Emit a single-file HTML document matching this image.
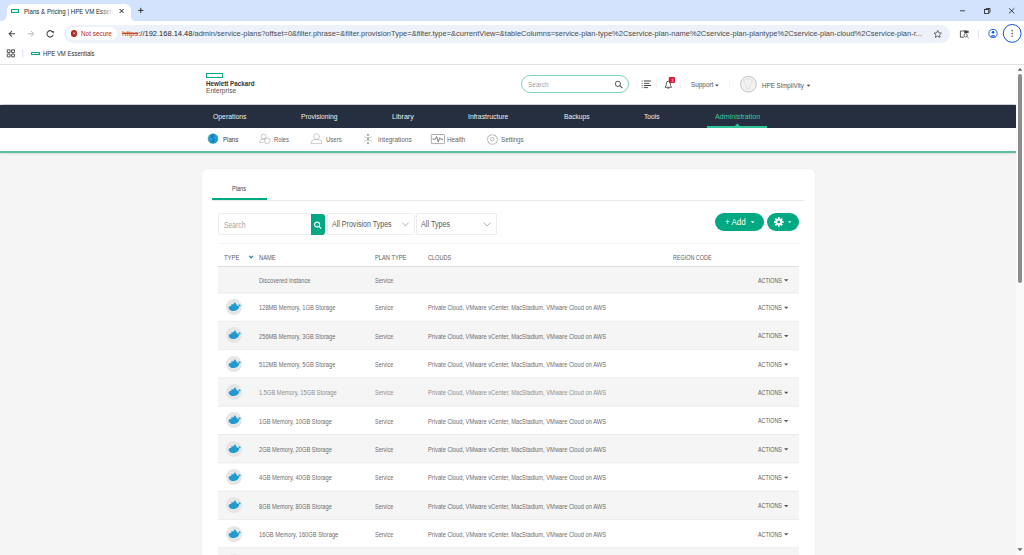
<!DOCTYPE html>
<html><head><meta charset="utf-8">
<style>
*{box-sizing:border-box;margin:0;padding:0}
html,body{width:1024px;height:555px;overflow:hidden;background:#f5f5f5;font-family:"Liberation Sans",sans-serif}
.a{position:absolute}
.t{position:absolute;white-space:nowrap;line-height:1;transform-origin:0 0}
svg{position:absolute;overflow:visible}
.nv{}
</style></head><body>

<!-- ===== Browser chrome ===== -->
<div class="a" style="left:0;top:0;width:1024px;height:21.3px;background:#d3e3fd"></div>
<!-- active tab -->
<div class="a" style="left:6.5px;top:3.5px;width:124px;height:18px;background:#fff;border-radius:6px 6px 0 0"></div>
<svg style="left:0;top:0" width="1024" height="22">
  <path d="M0.5 21.4 A6 6 0 0 0 6.6 15.4 L7 15.4 L7 21.4Z" fill="#fff"/>
  <path d="M130.4 15.4 A6 6 0 0 0 136.4 21.4 L130 21.4 L130 15.4Z" fill="#fff"/>
</svg>
<div class="a" style="left:10.6px;top:9px;width:8.8px;height:3.6px;border:1.3px solid #01a982;border-radius:0.6px;background:#dff5ee"></div>
<div class="t" style="left:23.7px;top:7.6px;font-size:7.5px;color:#2a2a2a;transform:scaleX(0.82)">Plans &amp; Pricing | HPE VM Essen</div>
<div class="a" style="left:100px;top:5px;width:14px;height:12px;background:linear-gradient(90deg,rgba(255,255,255,0),#fff)"></div>
<svg style="left:0;top:0" width="1024" height="22">
  <path d="M119.6 9 L123.6 13 M123.6 9 L119.6 13" stroke="#1f1f1f" stroke-width="1"/>
  <path d="M140.8 7.8 V13 M138.2 10.4 H143.4" stroke="#1f1f1f" stroke-width="0.9"/>
  <path d="M960 10.8 H965" stroke="#1f1f1f" stroke-width="0.8"/>
  <rect x="984.5" y="9.5" width="4.3" height="4" fill="none" stroke="#1f1f1f" stroke-width="0.8"/>
  <path d="M986 9.5 V8.5 H990 V12.3 H988.8" fill="none" stroke="#1f1f1f" stroke-width="0.8"/>
  <path d="M1009 8.2 L1014.4 13.4 M1014.4 8.2 L1009 13.4" stroke="#1f1f1f" stroke-width="0.8"/>
</svg>
<!-- toolbar -->
<div class="a" style="left:0;top:21.3px;width:1024px;height:43px;background:#fff"></div>
<svg style="left:0;top:21" width="1024" height="24">
  <path d="M15 12.8 H9.2 M11.9 10 L9.1 12.8 L11.9 15.6" fill="none" stroke="#474747" stroke-width="1.05"/>
  <path d="M27.8 12.8 H33.6 M30.9 10 L33.7 12.8 L30.9 15.6" fill="none" stroke="#b8b8b8" stroke-width="1.0"/>
  <path d="M52.9 11.2 A3.2 3.2 0 1 0 53.2 13.8" fill="none" stroke="#474747" stroke-width="1.05"/>
  <path d="M50.8 9.9 L53.8 9.9 L53.8 12.8Z" fill="#474747"/>
</svg>
<div class="a" style="left:64.4px;top:24.7px;width:885.6px;height:17.9px;background:#edf2fa;border-radius:9px"></div>
<div class="a" style="left:66.7px;top:27px;width:50.4px;height:12.9px;background:#fff;border-radius:6.5px"></div>
<div class="a" style="left:71px;top:30.4px;width:6.4px;height:6.4px;background:#b3261e;border-radius:50%"></div>
<svg style="left:0;top:0" width="200" height="45">
  <path d="M73.3 32.5 L75.1 34.3 M75.1 32.5 L73.3 34.3" stroke="#fff" stroke-width="0.7"/>
</svg>
<div class="t" style="left:80.8px;top:30.1px;font-size:7.7px;color:#b3261e;transform:scaleX(0.83)">Not secure</div>
<div class="t" style="left:121.6px;top:30.2px;font-size:7.6px;color:#4a4a4a;transform:scaleX(0.987)"><span style="color:#c5433a;text-decoration:line-through;text-decoration-thickness:0.5px">https</span><span style="color:#1f1f1f">://192.168.14.48</span>/admin/service-plans?offset=0&amp;filter.phrase=&amp;filter.provisionType=&amp;filter.type=&amp;currentView=&amp;tableColumns=service-plan-type%2Cservice-plan-name%2Cservice-plan-plantype%2Cservice-plan-cloud%2Cservice-plan-r...</div>
<svg style="left:0;top:0" width="1024" height="64">
  <path d="M937.7 30.4 L938.8 32.8 L941.4 33.1 L939.5 34.9 L940 37.4 L937.7 36.1 L935.4 37.4 L935.9 34.9 L934 33.1 L936.6 32.8Z" fill="none" stroke="#474747" stroke-width="0.8" stroke-linejoin="round"/>
  <path d="M966 31 H960.4 V37.2 H964" fill="none" stroke="#474747" stroke-width="0.9"/>
  <rect x="964.2" y="30.6" width="4.4" height="2.4" fill="#474747"/>
  <circle cx="965.6" cy="35.2" r="1.6" fill="none" stroke="#474747" stroke-width="0.8"/>
  <path d="M966.8 36.4 L968.6 38" stroke="#474747" stroke-width="0.8"/>
  <path d="M978.6 29.6 V37.7" stroke="#c7d3e8" stroke-width="0.6"/>
  <circle cx="993" cy="33.5" r="4.1" fill="none" stroke="#0b57d0" stroke-width="0.9"/>
  <circle cx="993" cy="32.3" r="1.3" fill="#0b57d0"/>
  <path d="M990.6 36.4 Q993 33.9 995.4 36.4" fill="#0b57d0" stroke="#0b57d0" stroke-width="0.6"/>
  <circle cx="1012.2" cy="33.4" r="8.9" fill="none" stroke="#0b57d0" stroke-width="1"/>
  <circle cx="1012.2" cy="30.8" r="0.75" fill="#474747"/>
  <circle cx="1012.2" cy="33.4" r="0.75" fill="#474747"/>
  <circle cx="1012.2" cy="36" r="0.75" fill="#474747"/>
  <!-- bookmarks bar -->
  <rect x="7.3" y="49.8" width="2.8" height="2.8" rx="0.15" fill="none" stroke="#474747" stroke-width="0.95"/>
  <rect x="11.6" y="49.8" width="2.8" height="2.8" rx="0.15" fill="none" stroke="#474747" stroke-width="0.95"/>
  <rect x="7.3" y="54.1" width="2.8" height="2.8" rx="0.15" fill="none" stroke="#474747" stroke-width="0.95"/>
  <rect x="11.6" y="54.1" width="2.8" height="2.8" rx="0.15" fill="none" stroke="#474747" stroke-width="0.95"/>
  <path d="M22.7 49.3 V57.6" stroke="#c7d3e8" stroke-width="0.7"/>
</svg>
<div class="a" style="left:30.8px;top:51.5px;width:8.8px;height:3.6px;border:1.3px solid #01a982;border-radius:0.6px;background:#dff5ee"></div>
<div class="t" style="left:43px;top:50.3px;font-size:7px;color:#303030;transform:scaleX(0.85)">HPE VM Essentials</div>
<div class="a" style="left:0;top:64px;width:1024px;height:0.8px;background:#e3e3e3"></div>

<!-- ===== Page ===== -->
<div class="a" style="left:0;top:64.8px;width:1015.5px;height:39.5px;background:#fff;box-shadow:0 0.5px 1px rgba(0,0,0,0.15)"></div>
<div class="a" style="left:206px;top:73px;width:16.5px;height:5.3px;border:1.2px solid #01a982"></div>
<div class="t" style="left:206px;top:80.4px;font-size:7.4px;font-weight:700;color:#333;transform:scaleX(0.85)">Hewlett Packard</div>
<div class="t" style="left:206px;top:87.2px;font-size:7.3px;color:#555;transform:scaleX(0.91)">Enterprise</div>
<div class="a" style="left:521px;top:75.4px;width:108px;height:17.6px;border:1.1px solid #7fd1bd;border-radius:9px;background:#fff"></div>
<div class="t" style="left:527.7px;top:80.9px;font-size:7.8px;color:#a5a5a5;transform:scaleX(0.83)">Search</div>
<svg style="left:0;top:0" width="1024" height="104">
  <circle cx="617.9" cy="83.8" r="2.6" fill="none" stroke="#555" stroke-width="1"/>
  <path d="M619.8 85.7 L622.4 88" stroke="#555" stroke-width="1.1"/>
  <g stroke="#444" stroke-width="0.9">
   <path d="M641.7 81 H642.5 M643.9 81 H650.9" stroke-width="1.05"/>
   <path d="M641.7 83.4 H642.5 M643.9 83.4 H649.4" stroke-width="0.9"/>
   <path d="M641.7 85.5 H642.5 M643.9 85.5 H650.9" stroke-width="1.05"/>
   <path d="M641.7 87.6 H642.5 M643.9 87.6 H647.9" stroke-width="0.95"/>
  </g>
  <path d="M656.6 82 V89" stroke="#e6e6e6" stroke-width="0.6"/>
  <path d="M665 87.3 Q666.3 86 666.3 84 Q666.3 81.2 668.3 81.2 Q670.3 81.2 670.3 84 Q670.3 86 671.6 87.3Z" fill="none" stroke="#444" stroke-width="0.85"/>
  <path d="M667.4 88.2 H669.2" stroke="#444" stroke-width="0.9"/>
  <rect x="668.8" y="77" width="6.2" height="6" rx="1" fill="#d8163a"/><path d="M71 79.2 H72.9 L71.8 80.2 Q73 80.3 72.9 81.2 Q72.6 82 71 81.6" transform="translate(600.5 0)" fill="none" stroke="#fff" stroke-width="0.45"/>
  <path d="M680.2 82 V89" stroke="#e6e6e6" stroke-width="0.6"/>
  <path d="M715 84.5 H718.8 L716.9 86.4Z" fill="#444"/>
  <path d="M729.6 81 V88.5" stroke="#e6e6e6" stroke-width="0.6"/>
  <circle cx="748.4" cy="84.2" r="7.9" fill="#f2f2f2" stroke="#b5b5b5" stroke-width="0.8"/>
  <path d="M743.5 81 Q745 78.5 748 79 Q751 78.5 752.5 81 Q752 84 749.5 86 L749.5 89 H746.5 L746.5 86 Q744 84 743.5 81Z" fill="none" stroke="#d4d4d4" stroke-width="0.6"/>
  <path d="M806.6 84.8 H810.4 L808.5 86.7Z" fill="#444"/>
</svg>
<div class="t" style="left:691px;top:81px;font-size:7px;color:#555;transform:scaleX(0.91)">Support</div>
<div class="t" style="left:761.7px;top:81.5px;font-size:7.4px;color:#555;transform:scaleX(0.845)">HPE SimpliVity</div>

<!-- main nav -->
<div class="a" style="left:0;top:104.5px;width:1015.5px;height:23.5px;background:#262f3f"></div>
<div class="t nv" style="left:212.8px;top:112.6px;font-size:7.6px;color:#f0f0f0;transform:scaleX(0.9)">Operations</div>
<div class="t nv" style="left:300.6px;top:112.6px;font-size:7.6px;color:#f0f0f0;transform:scaleX(0.88)">Provisioning</div>
<div class="t nv" style="left:392px;top:112.6px;font-size:7.6px;color:#f0f0f0;transform:scaleX(0.94)">Library</div>
<div class="t nv" style="left:468px;top:112.6px;font-size:7.6px;color:#f0f0f0;transform:scaleX(0.9)">Infrastructure</div>
<div class="t nv" style="left:563.8px;top:112.6px;font-size:7.6px;color:#f0f0f0;transform:scaleX(0.88)">Backups</div>
<div class="t nv" style="left:643.9px;top:112.6px;font-size:7.6px;color:#f0f0f0;transform:scaleX(0.88)">Tools</div>
<div class="t nv" style="left:714.7px;top:112.6px;font-size:7.6px;color:#3ccaa0;transform:scaleX(0.94)">Administration</div>
<div class="a" style="left:707.3px;top:126px;width:60.2px;height:2px;background:#2fc39a"></div>
<svg style="left:0;top:0" width="1024" height="130"><path d="M734.6 126.2 L737.4 123.6 L740.2 126.2Z" fill="#2fc39a"/></svg>

<!-- sub nav -->
<div class="a" style="left:0;top:128px;width:1015.5px;height:23px;background:#fff"></div>
<div class="a" style="left:0;top:151px;width:1015.5px;height:2px;background:#5cc0a2;box-shadow:0 1px 2px rgba(0,0,0,0.12)"></div>
<svg style="left:0;top:0" width="1024" height="153">
  <circle cx="213" cy="138.7" r="4.9" fill="#1da0d5" stroke="#1b5f8a" stroke-width="0.6" stroke-dasharray="0.9 0.7"/>
  <path d="M214.4 136.3 Q213.2 135.4 212 136.2 Q211.2 137.3 212.8 138.5 Q214.6 139.7 213.9 141.1 Q212.8 142.1 211.3 141.2" fill="none" stroke="#1b4f8a" stroke-width="0.8"/>
  <path d="M212.9 134.8 V135.8 M212.6 141.6 V142.6" stroke="#1b6f5a" stroke-width="0.6"/>
  <g fill="none" stroke="#a5a5a5" stroke-width="0.6">
   <circle cx="263.6" cy="136.6" r="2.5"/>
   <path d="M265.3 139 Q263 138.6 260.6 140 Q258.8 141.3 259.5 142.4 Q261 143.2 263.8 142.1"/>
   <circle cx="267.2" cy="140.8" r="2.8"/>
  </g>
  <g fill="none" stroke="#aaa" stroke-width="0.6">
   <circle cx="316.5" cy="136.6" r="2.9"/>
   <path d="M311 143.6 Q311.2 140 314 139.5 L319 139.5 Q321.8 140 322 143.6Z"/>
  </g>
  <g fill="#a0a0a0" stroke="#a0a0a0" stroke-width="0.55">
   <circle cx="368" cy="134.8" r="0.9"/>
   <circle cx="368" cy="139" r="0.9"/>
   <circle cx="368" cy="143.2" r="0.9"/>
   <path d="M364.2 136.4 Q365 138.2 368 137.4 Q371 138.2 371.8 136.4" fill="none"/>
   <path d="M364.2 141.6 Q365 139.8 368 140.6 Q371 139.8 371.8 141.6" fill="none"/>
  </g>
  <rect x="431.3" y="134.5" width="13.2" height="9.1" rx="0.8" fill="none" stroke="#888" stroke-width="0.7"/>
  <path d="M432.5 139.2 H435.3 L436.6 136.6 L438.3 141.8 L439.7 137.8 L440.7 139.2 H443" fill="none" stroke="#555" stroke-width="0.75"/>
  <g fill="none" stroke="#8e8e8e" stroke-width="0.6" transform="translate(0.7 0.3)">
   <circle cx="491.7" cy="138.9" r="1.7"/>
   <path d="M491.7 134 L492.8 135.1 L494.5 134.6 L495 136.2 L496.6 136.8 L496.2 138.5 L497 139.8 L495.8 141 L495.8 142.7 L494.2 143 L493.2 144.2 L491.7 143.6 L490.2 144.2 L489.2 143 L487.6 142.7 L487.6 141 L486.4 139.8 L487.2 138.5 L486.8 136.8 L488.4 136.2 L488.9 134.6 L490.6 135.1Z"/>
  </g>
</svg>
<div class="t" style="left:222.6px;top:136px;font-size:7px;color:#3a3a3a;transform:scaleX(0.87)">Plans</div>
<div class="t" style="left:274px;top:136px;font-size:7px;color:#666;transform:scaleX(0.84)">Roles</div>
<div class="t" style="left:325.5px;top:136px;font-size:7px;color:#666;transform:scaleX(0.86)">Users</div>
<div class="t" style="left:377.5px;top:136px;font-size:7px;color:#666;transform:scaleX(0.92)">Integrations</div>
<div class="t" style="left:447.3px;top:136px;font-size:7px;color:#666;transform:scaleX(0.9)">Health</div>
<div class="t" style="left:501px;top:136px;font-size:7px;color:#666;transform:scaleX(0.9)">Settings</div>

<!-- ===== Card ===== -->
<div class="a" style="left:201.5px;top:168.5px;width:613.5px;height:420px;background:#fff;border-radius:6px;box-shadow:0 0 1.5px rgba(0,0,0,0.07)"></div>
<div class="t" style="left:231.8px;top:185.9px;font-size:6.8px;color:#444;transform:scaleX(0.82)">Plans</div>
<div class="a" style="left:212px;top:199.8px;width:592px;height:0.8px;background:#e9e9e9"></div>
<div class="a" style="left:212px;top:198px;width:55px;height:2px;background:#01a982"></div>
<!-- filters -->
<div class="a" style="left:218px;top:213.4px;width:94px;height:21.5px;border:0.8px solid #ececec;border-radius:2px 0 0 2px"></div>
<div class="a" style="left:311px;top:213.5px;width:14.3px;height:21.3px;background:#01a982;border-radius:0 3px 3px 0"></div>
<div class="t" style="left:224.2px;top:220.5px;font-size:8.6px;color:#a5a5a5;transform:scaleX(0.79)">Search</div>
<svg style="left:0;top:0" width="1024" height="260">
  <circle cx="317.1" cy="224.6" r="2.5" fill="none" stroke="#fff" stroke-width="1.1"/>
  <path d="M318.9 226.4 L321.2 228.6" stroke="#fff" stroke-width="1.2"/>
  <path d="M402.3 222.6 L405.5 225.9 L408.7 222.6" fill="none" stroke="#777" stroke-width="0.6"/>
  <path d="M483.6 222.6 L487.1 225.9 L490.6 222.6" fill="none" stroke="#777" stroke-width="0.6"/>
</svg>
<div class="a" style="left:327.4px;top:213.3px;width:87.2px;height:21.6px;border:0.8px solid #ececec;border-radius:1.5px"></div>
<div class="t" style="left:332px;top:219.9px;font-size:8.4px;color:#5a5a5a;transform:scaleX(0.845)">All Provision Types</div>
<div class="a" style="left:416.3px;top:213.3px;width:80.3px;height:21.6px;border:0.8px solid #ececec;border-radius:1.5px"></div>
<div class="t" style="left:421.4px;top:219.9px;font-size:8.4px;color:#5a5a5a;transform:scaleX(0.86)">All Types</div>
<div class="a" style="left:715px;top:213.4px;width:49px;height:17.2px;background:#01a982;border-radius:9px"></div>
<div class="t" style="left:725px;top:217.8px;font-size:8.4px;color:#fff;transform:scaleX(0.95)">+ Add</div>
<div class="a" style="left:767px;top:213.4px;width:32px;height:17.2px;background:#01a982;border-radius:9px"></div>
<svg style="left:0;top:0" width="1024" height="260">
  <path d="M750.8 221.3 H754.6 L752.7 223.2Z" fill="#fff"/>
  <path d="M788 221.3 H791.4 L789.7 223Z" fill="#fff"/>
  <g transform="translate(778.8 222)">
    <circle r="3.3" fill="#fff"/>
    <g fill="#fff">
      <rect x="-0.9" y="-4.8" width="1.8" height="9.6"/>
      <rect x="-0.9" y="-4.8" width="1.8" height="9.6" transform="rotate(45)"/>
      <rect x="-0.9" y="-4.8" width="1.8" height="9.6" transform="rotate(90)"/>
      <rect x="-0.9" y="-4.8" width="1.8" height="9.6" transform="rotate(135)"/>
    </g>
    <circle r="1.4" fill="#01a982"/>
  </g>
</svg>
<div class="a" style="left:218px;top:243px;width:581px;height:1px;background:#f4f4f4"></div>
<!-- table header -->
<div class="t" style="left:224.2px;top:255.3px;font-size:6.3px;color:#606060;transform:scaleX(0.94)">TYPE</div>
<svg style="left:0;top:0" width="1024" height="270"><path d="M249.3 255.9 L251.1 257.9 L252.9 255.9" fill="none" stroke="#2a78a8" stroke-width="1.25" stroke-linejoin="round"/></svg>
<div class="t" style="left:258.9px;top:255.3px;font-size:6.3px;color:#606060;transform:scaleX(0.91)">NAME</div>
<div class="t" style="left:375.4px;top:255.3px;font-size:6.3px;color:#606060;transform:scaleX(0.91)">PLAN TYPE</div>
<div class="t" style="left:428px;top:255.3px;font-size:6.3px;color:#606060;transform:scaleX(0.88)">CLOUDS</div>
<div class="t" style="left:672.8px;top:255.3px;font-size:6.3px;color:#606060;transform:scaleX(0.86)">REGION CODE</div>
<div class="a" style="left:218px;top:266px;width:581px;height:1px;background:#dedede;box-shadow:0 0.5px 1px rgba(0,0,0,0.08)"></div>
<svg width="0" height="0" style="position:absolute"><defs>
<symbol id="dk" viewBox="0 0 16 16">
<circle cx="8" cy="8" r="8" fill="#e6e6e6"/>
<path fill="#2299cf" d="M2.5 8.3 L12.2 8.3 Q12.6 7.3 13.6 7 Q14.5 6.8 15.2 6.3 Q14.6 5.9 13.9 6.1 Q13.6 5.3 13 4.9 Q12.3 5.8 12.5 6.9 L11.2 6.9 L11.2 5.4 L9.8 5.4 L9.8 3.8 L7.9 3.8 L7.9 5.3 L5.3 5.3 L5.3 6.9 L3.3 6.9 L3.3 8.3Z M2.4 8.2 Q2.8 10.7 4.7 11.5 Q6.1 12.1 8.1 12 Q11.9 11.7 13.7 7.3 L12.2 8.2Z"/>
</symbol></defs></svg>
<svg style="left:0;top:0" width="1024" height="555">
<rect x="218" y="266.9" width="581" height="26.10" fill="#f5f5f5"/>
<rect x="218" y="321.31" width="581" height="28.31" fill="#f5f5f5"/>
<rect x="218" y="377.93" width="581" height="28.31" fill="#f5f5f5"/>
<rect x="218" y="434.55" width="581" height="28.31" fill="#f5f5f5"/>
<rect x="218" y="491.17" width="581" height="28.31" fill="#f5f5f5"/>
<rect x="218" y="547.79" width="581" height="28.31" fill="#f5f5f5"/>
<rect x="218" y="292.50" width="581" height="1" fill="#ececee"/>
<rect x="218" y="320.81" width="581" height="1" fill="#ececee"/>
<rect x="218" y="349.12" width="581" height="1" fill="#ececee"/>
<rect x="218" y="377.43" width="581" height="1" fill="#ececee"/>
<rect x="218" y="405.74" width="581" height="1" fill="#ececee"/>
<rect x="218" y="434.05" width="581" height="1" fill="#ececee"/>
<rect x="218" y="462.36" width="581" height="1" fill="#ececee"/>
<rect x="218" y="490.67" width="581" height="1" fill="#ececee"/>
<rect x="218" y="518.98" width="581" height="1" fill="#ececee"/>
<rect x="218" y="547.29" width="581" height="1" fill="#ececee"/>
<path d="M784 279.20 H788.4 L786.2 281.40Z" fill="#555"/>
<path d="M784 306.80 H788.4 L786.2 309.00Z" fill="#555"/>
<path d="M784 335.11 H788.4 L786.2 337.31Z" fill="#555"/>
<path d="M784 363.42 H788.4 L786.2 365.62Z" fill="#555"/>
<path d="M784 391.73 H788.4 L786.2 393.93Z" fill="#555"/>
<path d="M784 420.04 H788.4 L786.2 422.24Z" fill="#555"/>
<path d="M784 448.35 H788.4 L786.2 450.55Z" fill="#555"/>
<path d="M784 476.66 H788.4 L786.2 478.86Z" fill="#555"/>
<path d="M784 504.97 H788.4 L786.2 507.17Z" fill="#555"/>
<path d="M784 533.28 H788.4 L786.2 535.48Z" fill="#555"/>
<path d="M784 561.59 H788.4 L786.2 563.79Z" fill="#555"/>
</svg>
<div class="t" style="left:258.9px;top:277.76px;font-size:6.3px;color:#6e6e6e;transform:scaleX(0.901)">Discovered Instance</div>
<div class="t" style="left:375px;top:277.76px;font-size:6.3px;color:#6e6e6e;transform:scaleX(0.870)">Service</div>
<div class="t" style="left:758px;top:277.52px;font-size:6.8px;color:#606060;transform:scaleX(0.79)">ACTIONS</div>
<svg style="left:226.4px;top:299.05px" width="16" height="16"><use href="#dk"/></svg>
<div class="t" style="left:258.9px;top:305.36px;font-size:6.3px;color:#6e6e6e;transform:scaleX(0.911)">128MB Memory, 1GB Storage</div>
<div class="t" style="left:375px;top:305.36px;font-size:6.3px;color:#6e6e6e;transform:scaleX(0.870)">Service</div>
<div class="t" style="left:428.2px;top:305.36px;font-size:6.3px;color:#6e6e6e;transform:scaleX(0.911)">Private Cloud, VMware vCenter, MacStadium, VMware Cloud on AWS</div>
<div class="t" style="left:758px;top:305.12px;font-size:6.8px;color:#606060;transform:scaleX(0.79)">ACTIONS</div>
<svg style="left:226.4px;top:327.36px" width="16" height="16"><use href="#dk"/></svg>
<div class="t" style="left:258.9px;top:333.67px;font-size:6.3px;color:#6e6e6e;transform:scaleX(0.911)">256MB Memory, 3GB Storage</div>
<div class="t" style="left:375px;top:333.67px;font-size:6.3px;color:#6e6e6e;transform:scaleX(0.870)">Service</div>
<div class="t" style="left:428.2px;top:333.67px;font-size:6.3px;color:#6e6e6e;transform:scaleX(0.911)">Private Cloud, VMware vCenter, MacStadium, VMware Cloud on AWS</div>
<div class="t" style="left:758px;top:333.43px;font-size:6.8px;color:#606060;transform:scaleX(0.79)">ACTIONS</div>
<svg style="left:226.4px;top:355.67px" width="16" height="16"><use href="#dk"/></svg>
<div class="t" style="left:258.9px;top:361.98px;font-size:6.3px;color:#6e6e6e;transform:scaleX(0.911)">512MB Memory, 5GB Storage</div>
<div class="t" style="left:375px;top:361.98px;font-size:6.3px;color:#6e6e6e;transform:scaleX(0.870)">Service</div>
<div class="t" style="left:428.2px;top:361.98px;font-size:6.3px;color:#6e6e6e;transform:scaleX(0.911)">Private Cloud, VMware vCenter, MacStadium, VMware Cloud on AWS</div>
<div class="t" style="left:758px;top:361.74px;font-size:6.8px;color:#606060;transform:scaleX(0.79)">ACTIONS</div>
<svg style="left:226.4px;top:383.98px" width="16" height="16"><use href="#dk"/></svg>
<div class="t" style="left:258.9px;top:390.29px;font-size:6.3px;color:#8e8e8e;transform:scaleX(0.911)">1.5GB Memory, 15GB Storage</div>
<div class="t" style="left:375px;top:390.29px;font-size:6.3px;color:#8e8e8e;transform:scaleX(0.870)">Service</div>
<div class="t" style="left:428.2px;top:390.29px;font-size:6.3px;color:#8e8e8e;transform:scaleX(0.911)">Private Cloud, VMware vCenter, MacStadium, VMware Cloud on AWS</div>
<div class="t" style="left:758px;top:390.05px;font-size:6.8px;color:#606060;transform:scaleX(0.79)">ACTIONS</div>
<svg style="left:226.4px;top:412.29px" width="16" height="16"><use href="#dk"/></svg>
<div class="t" style="left:258.9px;top:418.60px;font-size:6.3px;color:#6e6e6e;transform:scaleX(0.911)">1GB Memory, 10GB Storage</div>
<div class="t" style="left:375px;top:418.60px;font-size:6.3px;color:#6e6e6e;transform:scaleX(0.870)">Service</div>
<div class="t" style="left:428.2px;top:418.60px;font-size:6.3px;color:#6e6e6e;transform:scaleX(0.911)">Private Cloud, VMware vCenter, MacStadium, VMware Cloud on AWS</div>
<div class="t" style="left:758px;top:418.36px;font-size:6.8px;color:#606060;transform:scaleX(0.79)">ACTIONS</div>
<svg style="left:226.4px;top:440.60px" width="16" height="16"><use href="#dk"/></svg>
<div class="t" style="left:258.9px;top:446.91px;font-size:6.3px;color:#6e6e6e;transform:scaleX(0.911)">2GB Memory, 20GB Storage</div>
<div class="t" style="left:375px;top:446.91px;font-size:6.3px;color:#6e6e6e;transform:scaleX(0.870)">Service</div>
<div class="t" style="left:428.2px;top:446.91px;font-size:6.3px;color:#6e6e6e;transform:scaleX(0.911)">Private Cloud, VMware vCenter, MacStadium, VMware Cloud on AWS</div>
<div class="t" style="left:758px;top:446.67px;font-size:6.8px;color:#606060;transform:scaleX(0.79)">ACTIONS</div>
<svg style="left:226.4px;top:468.91px" width="16" height="16"><use href="#dk"/></svg>
<div class="t" style="left:258.9px;top:475.22px;font-size:6.3px;color:#6e6e6e;transform:scaleX(0.911)">4GB Memory, 40GB Storage</div>
<div class="t" style="left:375px;top:475.22px;font-size:6.3px;color:#6e6e6e;transform:scaleX(0.870)">Service</div>
<div class="t" style="left:428.2px;top:475.22px;font-size:6.3px;color:#6e6e6e;transform:scaleX(0.911)">Private Cloud, VMware vCenter, MacStadium, VMware Cloud on AWS</div>
<div class="t" style="left:758px;top:474.98px;font-size:6.8px;color:#606060;transform:scaleX(0.79)">ACTIONS</div>
<svg style="left:226.4px;top:497.22px" width="16" height="16"><use href="#dk"/></svg>
<div class="t" style="left:258.9px;top:503.53px;font-size:6.3px;color:#6e6e6e;transform:scaleX(0.911)">8GB Memory, 80GB Storage</div>
<div class="t" style="left:375px;top:503.53px;font-size:6.3px;color:#6e6e6e;transform:scaleX(0.870)">Service</div>
<div class="t" style="left:428.2px;top:503.53px;font-size:6.3px;color:#6e6e6e;transform:scaleX(0.911)">Private Cloud, VMware vCenter, MacStadium, VMware Cloud on AWS</div>
<div class="t" style="left:758px;top:503.29px;font-size:6.8px;color:#606060;transform:scaleX(0.79)">ACTIONS</div>
<svg style="left:226.4px;top:525.53px" width="16" height="16"><use href="#dk"/></svg>
<div class="t" style="left:258.9px;top:531.84px;font-size:6.3px;color:#6e6e6e;transform:scaleX(0.911)">16GB Memory, 160GB Storage</div>
<div class="t" style="left:375px;top:531.84px;font-size:6.3px;color:#6e6e6e;transform:scaleX(0.870)">Service</div>
<div class="t" style="left:428.2px;top:531.84px;font-size:6.3px;color:#6e6e6e;transform:scaleX(0.911)">Private Cloud, VMware vCenter, MacStadium, VMware Cloud on AWS</div>
<div class="t" style="left:758px;top:531.60px;font-size:6.8px;color:#606060;transform:scaleX(0.79)">ACTIONS</div>
<svg style="left:226.4px;top:553.84px" width="16" height="16"><use href="#dk"/></svg>
<div class="t" style="left:258.9px;top:560.15px;font-size:6.3px;color:#6e6e6e;transform:scaleX(0.911)">32GB Memory, 320GB Storage</div>
<div class="t" style="left:375px;top:560.15px;font-size:6.3px;color:#6e6e6e;transform:scaleX(0.870)">Service</div>
<div class="t" style="left:428.2px;top:560.15px;font-size:6.3px;color:#6e6e6e;transform:scaleX(0.911)">Private Cloud, VMware vCenter, MacStadium, VMware Cloud on AWS</div>
<div class="t" style="left:758px;top:559.91px;font-size:6.8px;color:#606060;transform:scaleX(0.79)">ACTIONS</div>
<!-- scrollbar -->
<div class="a" style="left:1015.5px;top:64.8px;width:8.5px;height:490.2px;background:#fafafa"></div>
<div class="a" style="left:1017.7px;top:74px;width:4.4px;height:208.5px;background:#8d8d8d;border-radius:2.2px"></div>
<svg style="left:0;top:0" width="1024" height="555">
 <path d="M1017.7 70.7 L1020 67.9 L1022.3 70.7Z" fill="#5f5f5f"/>
 <path d="M1017.5 548.2 L1022.5 548.2 L1020 551Z" fill="#5f5f5f"/>
</svg>

</body></html>
